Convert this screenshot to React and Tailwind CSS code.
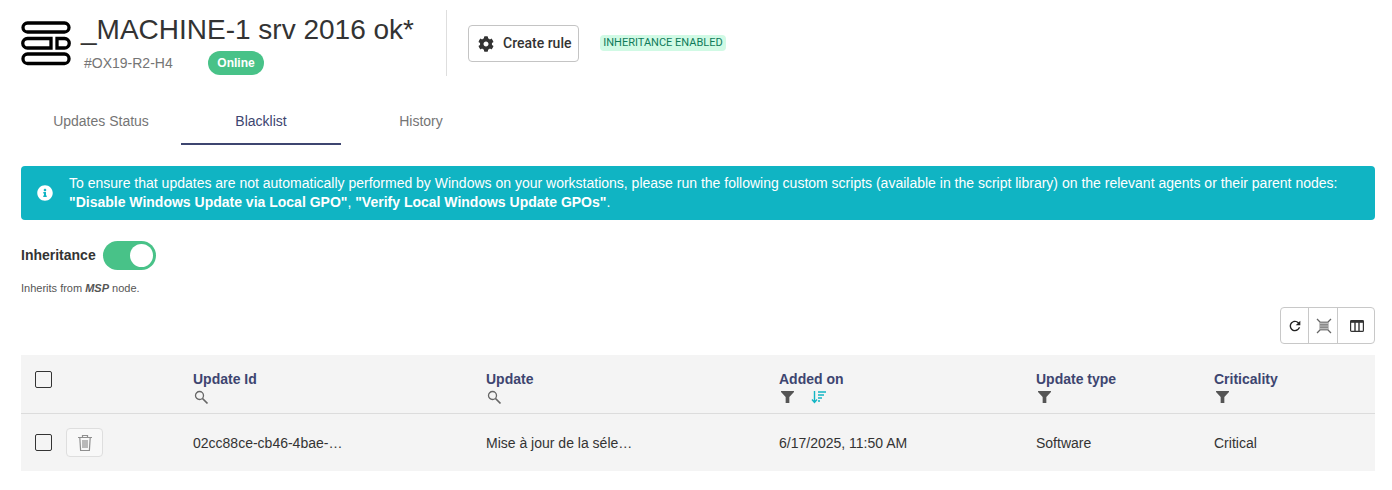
import React from "react";
import { FaCog, FaInfoCircle } from "react-icons/fa";
import { MdRefresh } from "react-icons/md";

const COLS = "grid grid-cols-[160px_293px_293px_257px_178px_173px]";

const MachineIcon = () => (
    <svg width="50" height="46" viewBox="0 0 50 46" fill="none" stroke="#000" strokeWidth="3.3" className="shrink-0">
        <rect x="2" y="3" width="46" height="9" rx="4.5" />
        <path d="M30 18.5H6.5a4.5 4.5 0 0 0 0 9.5H30z" />
        <path d="M36 18.5h7.5a4.5 4.5 0 0 1 0 9.5H36z" />
        <rect x="2" y="34" width="46" height="9.5" rx="4.5" />
    </svg>
);

const FitIcon = () => (
    <svg width="16" height="16" viewBox="0 0 16 16" fill="none">
        <rect x="3.5" y="3.5" width="9" height="9" fill="#8a8a8a" />
        <path d="M3.5 5.5h9M3.5 8h9M3.5 10.5h9" stroke="#c8c8c8" strokeWidth="0.8" />
        <path d="M1 1l3 3M15 1l-3 3M1 15l3-3M15 15l-3-3" stroke="#666" strokeWidth="1.3" />
    </svg>
);

const ColumnsIcon = () => (
    <svg width="14" height="12" viewBox="0 0 14 12" fill="none" stroke="#333" strokeWidth="1.2">
        <rect x="0.6" y="0.6" width="12.8" height="10.8" rx="1" />
        <path d="M0.5 1.5h13" strokeWidth="2.6" />
        <path d="M5 2v9M9 2v9" strokeWidth="1.4" />
    </svg>
);

const TrashIcon = () => (
    <svg width="16" height="18" viewBox="0 0 16 18" fill="none" stroke="#8f8f8f" strokeWidth="1.2">
        <path d="M1 3.5h14M5.5 3.5V1.5h5v2" />
        <path d="M2.8 3.5l.8 13h8.8l.8-13" />
        <path d="M6 6v8M8 6v8M10 6v8" />
    </svg>
);

const SortIcon = () => (
    <svg width="15" height="14" viewBox="0 0 15 14" fill="none" stroke="#13b5c4" strokeWidth="1.4">
        <path d="M3.5 1v11M1 9.5l2.5 3 2.5-3" />
        <path d="M7 2h8M7 5h6M7 8h4M7 11h2" />
    </svg>
);

const SearchIcon = () => (
    <svg width="15" height="15" viewBox="0 0 15 15" fill="none" stroke="#666" className="ml-px">
        <circle cx="5.5" cy="5.5" r="4" strokeWidth="1.3" />
        <path d="M8.5 8.5l5 5" strokeWidth="1.7" />
    </svg>
);

const FilterIcon = () => (
    <svg width="13" height="12" viewBox="0 0 14 13" fill="#555" className="ml-[2px]">
        <path d="M0 0h14v1L9 6.5V13H5V6.5L0 1z" />
    </svg>
);

const Checkbox = () => <span className="block w-[17px] h-[17px] rounded-[2px] border border-[#333] bg-transparent" />;

const HeaderCell = ({ title, children }) => (
    <div className="pl-3 pt-[15px]">
        <div className="text-[14px] leading-[18px] font-bold text-[#3d4570]">{title}</div>
        <div className="flex items-center h-[16px] mt-px">{children}</div>
    </div>
);

const Cell = ({ children }) => <div className="pl-3 pt-px flex items-center text-[14px] text-[#333]">{children}</div>;

export default function App() {
    return (
        <div className="min-h-[490px] bg-white pl-[21px] pr-[17px] font-['Liberation_Sans',Arial,sans-serif] text-[#333]">
            {/* Machine header */}
            <div className="flex items-start pt-[10px] h-[86px]">
                <div className="pt-[10px] w-[60px]">
                    <MachineIcon />
                </div>
                <div className="w-[365px]">
                    <h1 className="text-[28px] leading-[40px] text-[#333] whitespace-nowrap">_MACHINE-1 srv 2016 ok*</h1>
                    <div className="flex items-center mt-px pl-[3px]">
                        <span className="text-[14px] text-[#757575] w-[124px]">#OX19-R2-H4</span>
                        <span className="h-[24px] w-[56px] rounded-full bg-[#48c288] text-white text-[12px] font-bold flex items-center justify-center">
                            Online
                        </span>
                    </div>
                </div>
                <div className="w-px h-[66px] bg-[#dedede]" />
                <button className="ml-[21px] mt-[15px] w-[111px] h-[37px] rounded-[4px] border border-[#c4c4c4] bg-white flex items-center pl-[9px] gap-[9px] font-['Roboto',sans-serif] text-[14px] font-medium text-[#333]">
                    <FaCog className="text-[16px] text-[#333]" />
                    Create rule
                </button>
                <span className="ml-[21px] mt-[25px] h-[16px] w-[126px] rounded-[4px] bg-[#d1fae5] text-[#0f7a5a] font-['Roboto',sans-serif] text-[11px] flex items-center justify-center whitespace-nowrap">
                    INHERITANCE ENABLED
                </span>
            </div>

            {/* Tabs */}
            <div className="flex h-[59px] text-[14px] text-[#757575] pt-[4px]">
                <div className="w-[160px] h-[55px] flex items-center justify-center pt-[8px]">Updates Status</div>
                <div className="w-[160px] h-[55px] flex items-center justify-center text-[#3d4570] border-b-2 border-[#3d4570] pt-[10px]">Blacklist</div>
                <div className="w-[160px] h-[55px] flex items-center justify-center pt-[8px]">History</div>
            </div>

            {/* Notice */}
            <div className="mt-[21px] h-[54px] rounded-[4px] bg-[#10b4c3] text-white flex items-center pl-[16px] text-[14px] leading-[19px]">
                <FaInfoCircle className="text-[16px] shrink-0" />
                <div className="ml-[16px]">
                    <div className="whitespace-nowrap">
                        To ensure that updates are not automatically performed by Windows on your workstations, please run the following custom scripts (available in the script library) on the relevant agents or their parent nodes:
                    </div>
                    <div className="whitespace-nowrap">
                        <b>"Disable Windows Update via Local GPO"</b>, <b>"Verify Local Windows Update GPOs"</b>.
                    </div>
                </div>
            </div>

            {/* Inheritance */}
            <div className="mt-[21px] flex items-center h-[29px] gap-[7px]">
                <span className="font-bold text-[14px] text-[#333]">Inheritance</span>
                <span className="w-[53px] h-[29px] rounded-full bg-[#48c288] flex items-center justify-end pr-[3px]">
                    <span className="w-[23px] h-[23px] rounded-full bg-white" />
                </span>
            </div>
            <p className="mt-[10px] text-[11px] leading-[16px] text-[#555]">
                Inherits from <b className="italic">MSP</b> node.
            </p>

            {/* Table toolbar */}
            <div className="flex justify-end mt-[11px]">
                <div className="flex h-[37px] rounded-[4px] border border-[#c8c8c8] divide-x divide-[#c8c8c8] bg-white">
                    <div className="w-[28px] flex items-center justify-center pl-px"><MdRefresh className="text-[16px] text-[#222]" /></div>
                    <div className="w-[29px] flex items-center justify-center pl-[2px]"><FitIcon /></div>
                    <div className="w-[36px] flex items-center justify-center pl-[2px]"><ColumnsIcon /></div>
                </div>
            </div>

            {/* Table */}
            <div className="mt-[11px] bg-[#f4f4f4]">
                <div className={`${COLS} h-[59px] border-b border-[#dcdcdc]`}>
                    <div className="pl-[14px] pt-[16px]"><Checkbox /></div>
                    <HeaderCell title="Update Id"><SearchIcon /></HeaderCell>
                    <HeaderCell title="Update"><SearchIcon /></HeaderCell>
                    <HeaderCell title="Added on">
                        <FilterIcon />
                        <span className="ml-[17px]"><SortIcon /></span>
                    </HeaderCell>
                    <HeaderCell title="Update type"><FilterIcon /></HeaderCell>
                    <HeaderCell title="Criticality"><FilterIcon /></HeaderCell>
                </div>
                <div className={`${COLS} h-[57px]`}>
                    <div className="pl-[14px] flex items-center gap-[14px]">
                        <Checkbox />
                        <span className="w-[37px] h-[29px] rounded-[4px] border border-[#dedede] bg-[#f8f8f8] flex items-center justify-center"><TrashIcon /></span>
                    </div>
                    <Cell>02cc88ce-cb46-4bae-…</Cell>
                    <Cell>Mise à jour de la séle…</Cell>
                    <Cell>6/17/2025, 11:50 AM</Cell>
                    <Cell>Software</Cell>
                    <Cell>Critical</Cell>
                </div>
            </div>
        </div>
    );
}
